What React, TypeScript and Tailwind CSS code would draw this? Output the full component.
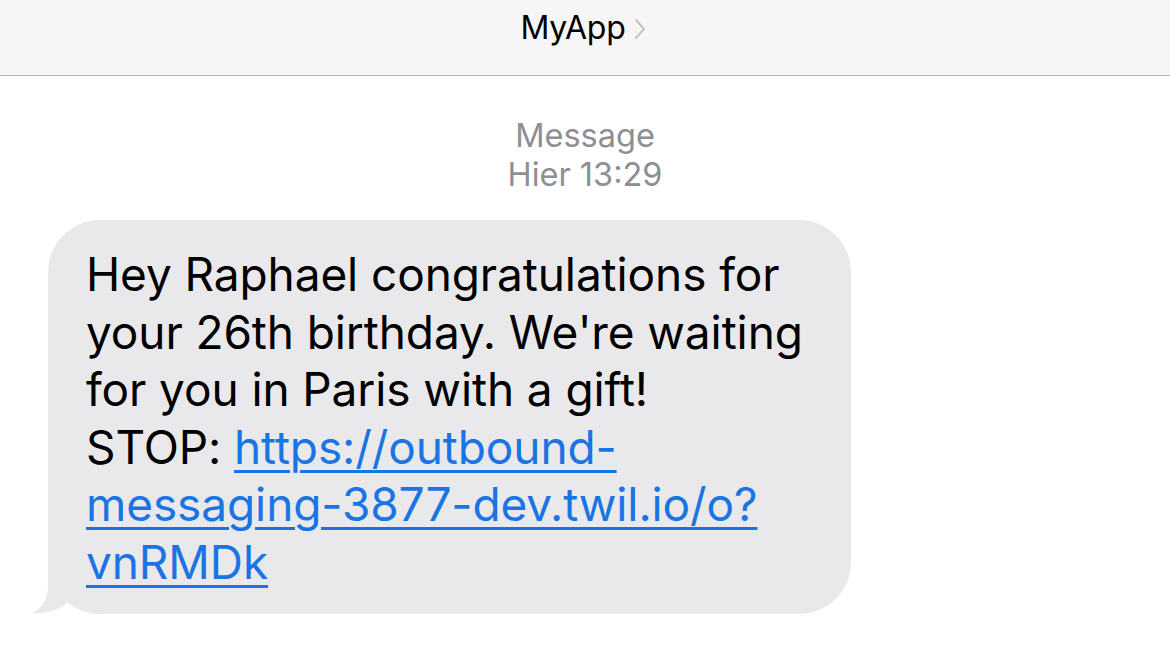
import React from "react";

export default function App() {
  return (
    <div className="w-[1170px] h-[662px] bg-white overflow-hidden" style={{ fontFamily: "Inter, 'Noto Sans', sans-serif" }}>
      {/* Header */}
      <div className="h-[76px] bg-[#f6f6f6] border-b border-[#b5b5b5] flex justify-center">
        <div className="flex items-center gap-[8px] -ml-[4px] h-[56px]">
          <span className="text-[32px] text-black tracking-[-0.2px]">MyApp</span>
          <svg width="12" height="22" viewBox="0 0 12 22" className="mt-[2px]">
            <path d="M2 2 L10 11 L2 20" fill="none" stroke="#c4c4c6" strokeWidth="2" strokeLinecap="round" strokeLinejoin="round" />
          </svg>
        </div>
      </div>

      {/* Timestamp */}
      <div className="flex flex-col items-center mt-[40px] text-[#8e8e93] text-[32.5px] leading-[39px]">
        <span>Message</span>
        <span>Hier 13:29</span>
      </div>

      {/* Bubble */}
      <div className="relative ml-[48px] mt-[26px] w-[803px]">
        <svg width="60" height="50" viewBox="0 0 60 50" className="absolute left-[-18px] bottom-0">
          <path d="M18 0 L18 22 C18 36 12 44 2 49 C14 50 26 47 36 40 L40 0 Z" fill="#e9e9eb" />
        </svg>
        <div className="relative bg-[#e9e9eb] rounded-[52px] pl-[38px] pr-[20px] pt-[26px] pb-[23px] text-[46px] leading-[57.5px] text-black whitespace-nowrap tracking-[-0.1px]">
          Hey Raphael congratulations for
          <br />
          your 26th birthday. We're waiting
          <br />
          for you in Paris with a gift!
          <br />
          STOP:{" "}
          <span className="text-[#1b74e4] underline decoration-[2.5px] underline-offset-[6px]">https://outbound-</span>
          <br />
          <span className="text-[#1b74e4] underline decoration-[2.5px] underline-offset-[6px]">messaging-3877-dev.twil.io/o?</span>
          <br />
          <span className="text-[#1b74e4] underline decoration-[2.5px] underline-offset-[6px]">vnRMDk</span>
        </div>
      </div>
    </div>
  );
}
